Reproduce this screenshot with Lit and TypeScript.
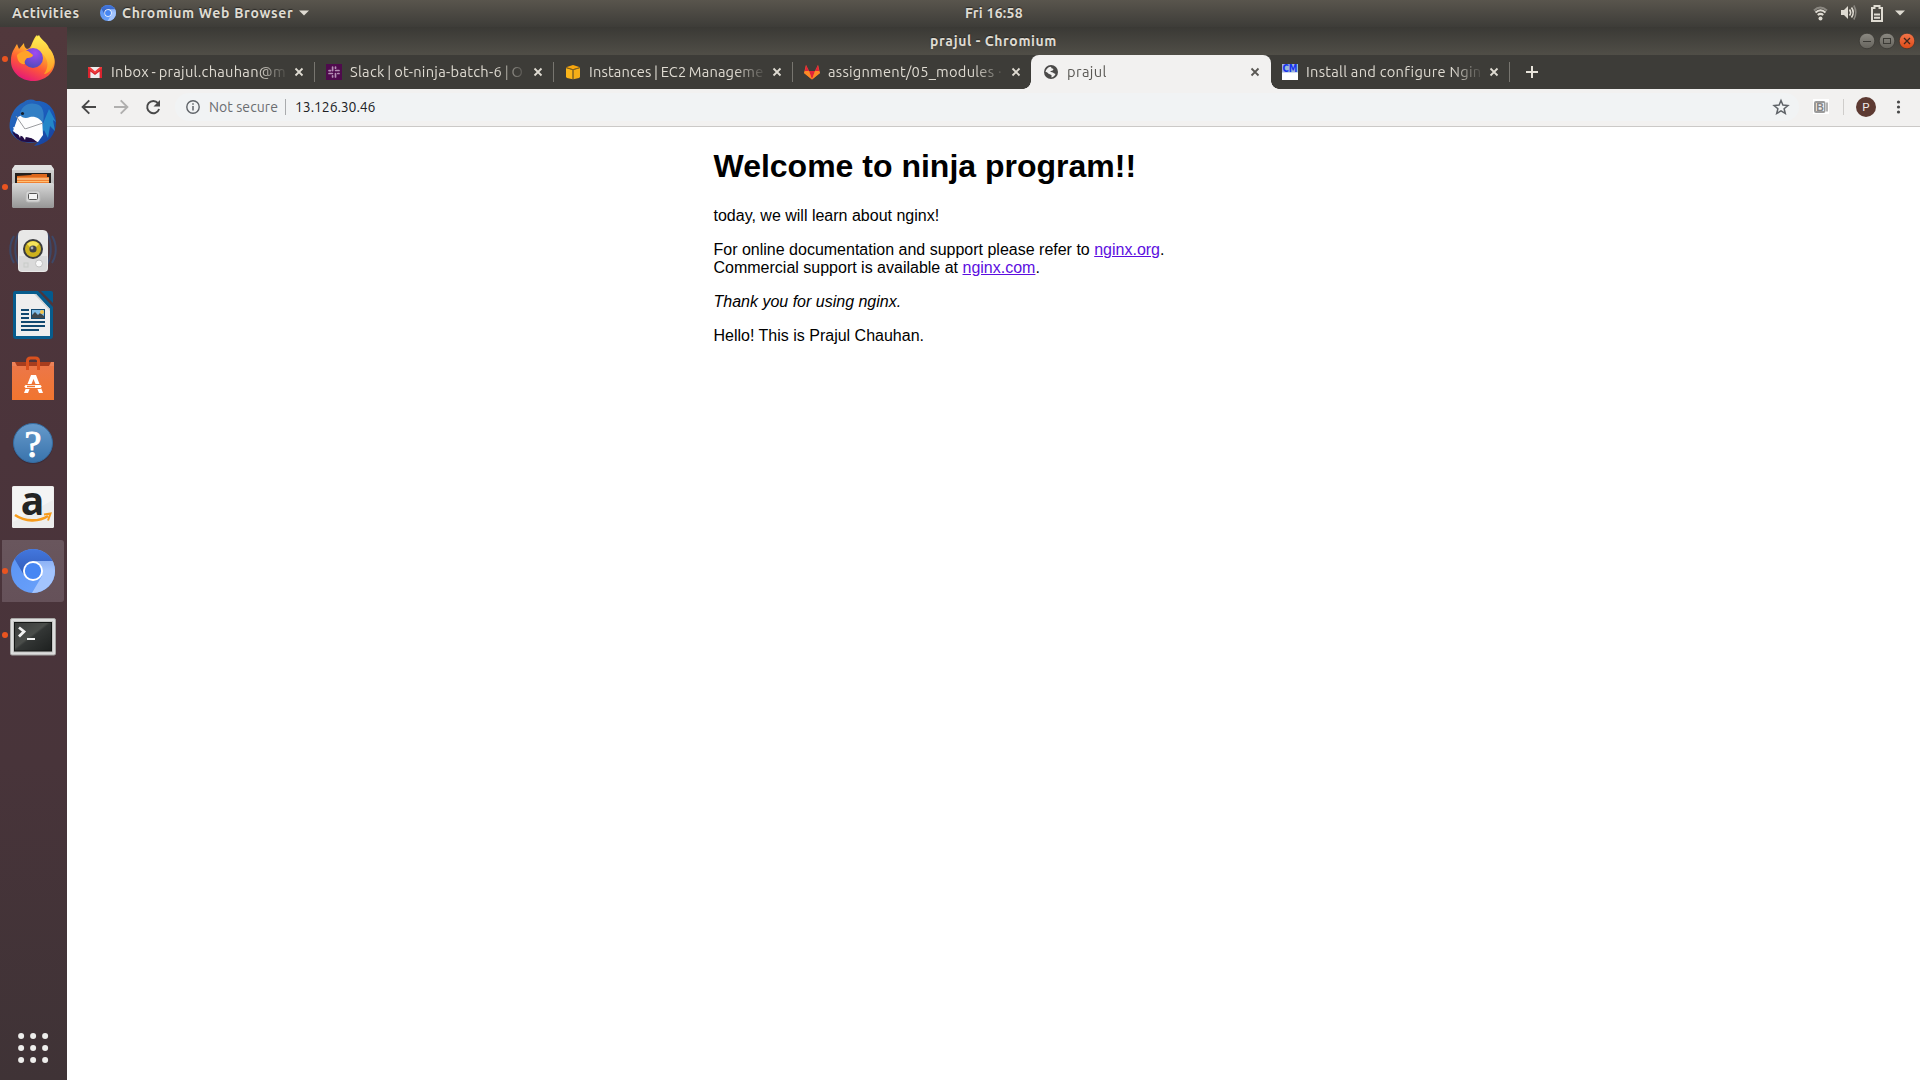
import { LitElement, html, svg, css } from "lit";
import { customElement } from "lit/decorators.js";
import { classMap } from "lit/directives/class-map.js";

const chromiumLogo = (id: string) => svg`
  <defs>
    <clipPath id="${id}-c"><circle cx="22" cy="22" r="22"/></clipPath>
    <linearGradient id="${id}-t" x1="0" y1="0" x2="0" y2="1"><stop offset="0" stop-color="#4377de"/><stop offset="1" stop-color="#3059b5"/></linearGradient>
    <linearGradient id="${id}-l" x1="0" y1="0" x2="1" y2="1"><stop offset="0" stop-color="#5a93f3"/><stop offset="1" stop-color="#6ca3fb"/></linearGradient>
    <linearGradient id="${id}-r" x1="0" y1="0" x2="0" y2="1"><stop offset="0" stop-color="#8db2f5"/><stop offset=".3" stop-color="#a3c4fd"/></linearGradient>
  </defs>
  <g clip-path="url(#${id}-c)">
    <rect width="44" height="44" fill="url(#${id}-l)"/>
    <path d="M3 9 L0 0 H44 V12 H22 L13.5 27 Z" fill="url(#${id}-t)"/>
    <path d="M22 12 H44 V44 H21 L31 27 Z" fill="url(#${id}-r)"/>
  </g>
  <circle cx="22" cy="22" r="10" fill="#fff"/>
  <circle cx="22" cy="22" r="8.1" fill="#4686f3"/>`;

const favicons: Record<string, unknown> = {
  gmail: svg`<path d="M1 3h14v11H1z" fill="#eee"/><path d="M1 14V3.6L8 9l7-5.4V14h-2.4V7.4L8 11 3.4 7.400V14z" fill="#d9232e"/><path d="M1 3h2l5 4.200L13 3h2v1L8 9.500 1 4z" fill="#ef3b3b"/>`,
  slack: svg`<rect width="16" height="16" fill="#4f0b4d"/>
    <g stroke="#b58fb5" stroke-width="1.700" stroke-linecap="round" fill="none">
    <path d="M6.600 3v3.600M3 6.600h1.600M9.500 3v1.200M9.600 6.500h3.400M3 9.500h3.400M6.600 11.800V13M9.500 9.500V13M11.800 9.500H13"/></g>`,
  aws: svg`<path d="M1 3.200 8 1l7 2.200-7 2.100z" fill="#f8a60d"/><path d="M1 4l6.600 2v9.200L2 14 1 13z" fill="#fbb51a"/><path d="M15 4 8.400 6v9.200L14 14l1-1z" fill="#f5ae17"/><path d="M1 3.600l7 2.100 7-2.100M8 5.700V15.300" stroke="#8b6416" stroke-width=".8" fill="none"/>`,
  gitlab: svg`<path d="M8 15.500 0 9l2-8 3 6h6l3-6 2 8z" fill="#fc6d26"/><path d="M8 15.500 5 7h6z" fill="#e2243a"/><path d="M8 15.500 0 9l1-2h4z" fill="#fc8a26"/><path d="M8 15.500l8-6.500-1-2h-4z" fill="#fc8a26"/><path d="M2 1 .9 7H5zM14 1l1.100 6H11z" fill="#e2243a"/>`,
  globe: svg`<circle cx="8" cy="8" r="7" fill="#4b4a49"/><path d="M2.500 7.700C3 5 5 3.200 7.500 2.700c1.500.3.300 1.800 1.800 1.700 1.200-.2 1.500 1.400.3 2-1 .6-2 .2-2.400 1.300.9.700 2.700.1 3.400 1.300.5.800 1.400.3 1.900 1.100-.7 2-2.100 3.100-4 3.500-.3-1.100.6-1.400-.2-2.600C7.200 10 5 10.200 4.600 8.700 4 8.100 3.200 8.500 2.500 7.700z" fill="#f2f1f0"/>`,
  cm: svg`<rect width="16" height="16" fill="#fff"/><rect width="16" height="8.500" fill="#9db8da"/><text x="8" y="7.900" text-anchor="middle" textLength="15" lengthAdjust="spacingAndGlyphs" font-family="DejaVu Sans" font-weight="bold" font-size="10" fill="#1a35ee">CM</text>`,
};

const tabs = [
  { icon: "gmail", title: "Inbox - prajul.chauhan@m", cls: "t1" },
  { icon: "slack", title: "Slack | ot-ninja-batch-6 | O", cls: "t2" },
  { icon: "aws", title: "Instances | EC2 Manageme", cls: "t3" },
  { icon: "gitlab", title: "assignment/05_modules ·", cls: "t4" },
  { icon: "globe", title: "prajul", cls: "t5", active: true },
  { icon: "cm", title: "Install and configure Ngin", cls: "t6" },
];

const launchers = [
  {
    name: "Firefox", running: true,
    art: svg`<defs>
      <linearGradient id="ff" x1=".75" y1="0" x2=".3" y2="1"><stop offset="0" stop-color="#fff04a"/><stop offset=".35" stop-color="#ffb52b"/><stop offset=".65" stop-color="#ff5a36"/><stop offset="1" stop-color="#e3157c"/></linearGradient>
      <linearGradient id="ffy" x1="0" y1="0" x2="0" y2="1"><stop offset="0" stop-color="#fff155"/><stop offset="1" stop-color="#ff9a22"/></linearGradient>
      <radialGradient id="ffp" cx=".6" cy=".25" r=".8"><stop offset="0" stop-color="#a04af3"/><stop offset="1" stop-color="#4c4bb8"/></radialGradient></defs>
      <g transform="translate(0 -2)">
      <path d="M28 2c2 5 9 8 11 14 4 3 7 8 6.800 13C45.500 40 36 48 24 48S1.500 39 2 27.500C2 20 5 16 8 11l2 5 5-6c0 3 1 5 3 6 5 0 5-10 10-14z" fill="url(#ff)"/>
      <path d="M30 2c2 5 8 7 10 13 5 5 7 13 3 20-2 4-6 6-8 6 5-7 4-13 1-17-2-4-7-6-14-6 0-8 4-12 8-16z" fill="url(#ffy)"/>
      <circle cx="24" cy="25" r="10" fill="url(#ffp)"/>
      <path d="M8 22c4-4 8-4 11-4l5 4c0 2-3 3-6 3-2 2-3 4-2 6-5 1-8-4-8-9z" fill="#ffa328"/></g>`,
  },
  {
    name: "Thunderbird", running: false,
    art: svg`<defs><linearGradient id="tb" x1="0" y1="0" x2="1" y2="1"><stop offset="0" stop-color="#2a69b9"/><stop offset=".5" stop-color="#1b5dbc"/><stop offset="1" stop-color="#173b96"/></linearGradient></defs>
      <path d="M1 31C-1 17 7 6 15 3c4-3 8-3 12-1 12-1 20 9 20 21 0 13-8 22-22 24l4-4C15 46 4 40 1 31z" fill="url(#tb)"/>
      <path d="M40 10l7 13-3-2 2 11-5-5-2 12-4-8-7 11 7-20z" fill="#2386c9"/>
      <path d="M9 18c6-4 17-4 24 1l1 17-5 7C18 41 10 37 4 32z" fill="#fdfdfe"/>
      <path d="M7 17l9 13 18-6" stroke="#9a9b9f" fill="none"/>
      <path d="M11 16c1-9 8-13 16-11 7 1 9 9 7 19-3-4-7-7-13-6-4 2-8 1-10-2z" fill="#327fc5"/>
      <circle cx="13.500" cy="14.500" r="1.600" fill="#16202e"/><path d="M3 32c5 4 11 6 20 7l5 4-10 0C10 43 5 38 3 32z" fill="#230e46"/>
      <path d="M4 28l3 7 1-3 3 7 1-4 4 6 1-4 10 4 3-8z" fill="#fdfdfe"/>`,
  },
  {
    name: "Files", running: true,
    art: svg`<defs><linearGradient id="fl" x1="0" y1="0" x2="0" y2="1"><stop offset="0" stop-color="#d8d8d8"/><stop offset="1" stop-color="#969696"/></linearGradient></defs>
      <g transform="translate(0 -1)">
      <path d="M3 7 6 3h36l3 4v38H3z" fill="url(#fl)"/><path d="M6 3h36l3 5H3z" fill="#e1e1e1"/><rect x="6" y="11" width="36" height="12" fill="#25201e"/>
      <path d="M8 14l14-1 1-1h15v10H8z" fill="#dc671c"/><path d="M8 15h32v7H8z" fill="#f18132"/><path d="M8 17h32" stroke="#fde1b6"/><path d="M8 19.500h32" stroke="#ffbf72"/>
      <path d="M5 21h38l2 1v23l-1 1H4l-1-1V22z" fill="url(#fl)"/><path d="M4 21.500h40" stroke="#d8d8d8"/>
      <rect x="17" y="29" width="14" height="11" rx="2" fill="#d7d7d7" stroke="#b9b9b9"/><rect x="19.500" y="31.500" width="9" height="6" rx="1" fill="#f4f4f4" stroke="#565656"/></g>`,
  },
  {
    name: "Rhythmbox", running: false,
    art: svg`<g fill="none" stroke="#3d4868" stroke-width="2"><path d="M5 9c-5 8-5 19 0 27M10 6C5 15 5 29 10 38M43 9c5 8 5 19 0 27M38 6c5 9 5 23 0 32"/></g>
      <path d="M14 3h20q5 0 5 6v32q0 4-4 4H13q-4 0-4-4V9q0-6 5-6z" fill="#e8e8e7"/><path d="M10 29h28v12q0 3-3 3H13q-3 0-3-3z" fill="#dadada"/>
      <circle cx="24" cy="22" r="10" fill="#3a3b3d"/><circle cx="24" cy="22" r="8" fill="#cdb21e"/><path d="M18 17a8 8 0 0 1 12 0l-4 4h-4z" fill="#f5e35b"/><circle cx="24" cy="22" r="3.600" fill="#404247"/><circle cx="23" cy="21" r="1.400" fill="#aeb1b5"/>
      <circle cx="30" cy="36.500" r="3.500" fill="#f8f8f8" stroke="#c2c2c2"/><rect x="15" y="36" width="4" height="4" fill="none" stroke="#c8cbc8"/>`,
  },
  {
    name: "LibreOffice Writer", running: false,
    art: svg`<path d="M6 0h23l15 16v29q0 3-3 3H7q-3 0-3-3V3q0-3 2-3z" fill="#075c8d"/><path d="M32 0h10q2 0 2 2v10z" fill="#045a8d"/>
      <path d="M7 3h20l14 15v27H7z" fill="#eee"/><path d="M27 3 41 18v2L25 3z" fill="#cfd1d2"/>
      <path d="M12 19h8M12 23h8M12 27h8M12 31h24M12 35h24M12 39h18" stroke="#11486f" stroke-width="2"/><rect x="22" y="18" width="14" height="10" fill="#11486f"/><rect x="23" y="19" width="12" height="8" fill="#80bce5"/><path d="M23 27v-3l3-3 3 3 2-2 4 3v2z" fill="#40484b"/><circle cx="33" cy="21" r="2" fill="#f3c44a"/>`,
  },
  {
    name: "Ubuntu Software", running: false,
    art: svg`<defs><linearGradient id="sw" x1="0" y1="0" x2="0" y2="1"><stop offset="0" stop-color="#ec7748"/><stop offset="1" stop-color="#f1752f"/></linearGradient></defs>
      <g transform="translate(0 1)">
      <path d="M3 6h42v5H3z" fill="#a63d1e"/><path d="M3 10h42v34H3z" fill="url(#sw)"/><path d="M3 10V6h3l2 4M45 10V6h-3l-2 4" fill="#ec8259"/>
      <path d="M18.500 14V5q0-3 3-3h5q3 0 3 3v9" fill="none" stroke="#d9511e" stroke-width="3"/>
      <path d="M22 19h5l7 18h-4l-2-5h-7l-2 5h-4zM22.500 28h4l-2-5z" fill="#fff"/><rect x="15" y="28.500" width="18" height="4" rx="2" fill="#fff" stroke="#f1752f"/><path d="M18 30.500h8" stroke="#f1752f" stroke-width="1.500"/></g>`,
  },
  {
    name: "Help", running: false,
    art: svg`<defs><linearGradient id="hp" x1="0" y1="0" x2="0" y2="1"><stop offset="0" stop-color="#669acb"/><stop offset="1" stop-color="#3973ac"/></linearGradient></defs>
      <circle cx="24" cy="25" r="20" fill="#3d2c39"/><circle cx="24" cy="24" r="19.500" fill="url(#hp)" stroke="#356da2"/><text x="24" y="37.500" text-anchor="middle" font-family="Liberation Serif" font-size="38" fill="#fff" stroke="#fff" stroke-width="1">?</text>`,
  },
  {
    name: "Amazon", running: false,
    art: svg`<rect x="3" y="3" width="42" height="42" rx="1.500" fill="#ededed"/><path d="M4 4h40v13L4 39z" fill="#f7f7f7" opacity=".7"/>
      <text x="23.500" y="31.500" text-anchor="middle" font-family="Open Sans" font-size="39" font-weight="bold" fill="#242424">a</text>
      <path d="M6 32c10 7 24 7 33 1" fill="none" stroke="#f79b1b" stroke-width="2.600"/><path d="M35 31.500l6.500-1-2.500 7" fill="none" stroke="#f79b1b" stroke-width="2"/>`,
  },
  { name: "Chromium", running: true, current: true, art: svg`<g transform="translate(2 2)">${chromiumLogo("dock")}</g>` },
  {
    name: "Terminal", running: true,
    art: svg`<defs><linearGradient id="tm" x1="0" y1="0" x2="1" y2="1"><stop offset="0" stop-color="#3a3c3b"/><stop offset=".45" stop-color="#4a4d4a"/><stop offset=".5" stop-color="#333635"/><stop offset="1" stop-color="#1d201f"/></linearGradient></defs>
      <g transform="translate(0 2.500)">
      <rect x="1.500" y="5" width="45" height="36.500" rx="1.500" fill="#ddd" stroke="#a7a7a5"/><rect x="4" y="7.500" width="40" height="31.500" fill="#c2c3c1"/><rect x="5.500" y="9" width="37" height="28.500" fill="url(#tm)" stroke="#141615"/>
      <path d="M10 14l5 4-5 5" stroke="#f2f2f2" stroke-width="2.800" fill="none"/><path d="M18 25.500h8" stroke="#f2f2f2" stroke-width="2"/></g>`,
  },
];

@customElement("dock-bar")
class DockBar extends LitElement {
  static styles = css`
    :host { display: flex; flex-direction: column; justify-content: space-between; box-sizing: border-box; width: 67px; padding-bottom: 8px;
      background: linear-gradient(#51383c, #4b343b 40%, #48343a 70%, #3f3336); }
    .list { display: flex; flex-direction: column; }
    .item { display: grid; grid-template-columns: 9px 48px; align-items: center; box-sizing: border-box; height: 64px; }
    .item .tile { display: grid; place-items: center; width: 48px; height: 48px; }
    .item.current { background: linear-gradient(#69565d, #655159) no-repeat 2px 1px / 62px 62px; clip-path: inset(1px 3px 1px 0 round 3px); }
    .dot { width: 6px; height: 6px; margin-left: 2px; border-radius: 50%; }
    .running .dot { background: #e95420; }
    svg { display: block; overflow: visible; }
    .apps { display: grid; place-items: center; height: 48px; }
  `;
  render() {
    return html`
      <div class="list">
        ${launchers.map((l: any) => html`
          <div class=${classMap({ item: true, running: l.running, current: !!l.current })}>
            <span class="dot"></span>
            <span class="tile"><svg width="48" height="48" viewBox="0 0 48 48">${l.art}</svg></span>
          </div>`)}
      </div>
      <div class="apps">
        <svg width="32" height="32" viewBox="0 0 32 32" fill="#eeeeec">
          ${[4, 16, 28].map((y) => [4, 16, 28].map((x) => svg`<circle cx=${x - 0.9} cy=${y} r="3"/>`))}
        </svg>
      </div>`;
  }
}

@customElement("tab-strip")
class TabStrip extends LitElement {
  static styles = css`
    :host { display: flex; height: 34px; padding-left: 8px; background: #3d3c38; font: 14.67px "Ubuntu", "Noto Sans", sans-serif; color: #dfdbd2; }
    .tab { display: grid; grid-template-columns: 16px 176px 16px; column-gap: 8px; align-items: center; box-sizing: border-box; width: 239px; padding: 0 0 0 12px; }
    .tab.divided, .add { background: linear-gradient(#77756f, #77756f) no-repeat 0 7px / 1px 20px; }
    .tab .close { margin-left: -4px; }
    .tab.active { background: #f2f1f0; color: #5a5854; border-radius: 8px 8px 0 0; width: 240px; margin-right: -1px; position: relative; }
    .tab.active::before, .tab.active::after { content: ""; position: absolute; bottom: 0; width: 8px; height: 8px; }
    .tab.active::before { left: -8px; background: radial-gradient(circle at 0 0, transparent 7.5px, #f2f1f0 8px); }
    .tab.active::after { right: -8px; background: radial-gradient(circle at 100% 0, transparent 7.5px, #f2f1f0 8px); }
    .title { white-space: nowrap; line-height: 20px; mask-image: linear-gradient(90deg, #000 146px, transparent 178px); }
    .t1 .title { letter-spacing: 0.27px; word-spacing: -1px; }
    .t2 .title { letter-spacing: 0.28px; word-spacing: -1px; }
    .t3 .title { letter-spacing: 0.14px; word-spacing: -1px; }
    .t4 .title { letter-spacing: 0.25px; }
    .t5 .title { letter-spacing: 0.4px; }
    .t6 .title { letter-spacing: 0.26px; }
    svg { display: block; }
    .add { display: grid; align-items: center; padding-left: 15px; }
  `;
  render() {
    return html`
      ${tabs.map((t: any, i) => html`
        <div class=${classMap({ tab: true, [t.cls]: true, active: !!t.active, divided: i > 0 && !t.active && !(tabs[i - 1] as any).active })}>
          <svg width="16" height="16" viewBox="0 0 16 16">${favicons[t.icon]}</svg>
          <span class="title">${t.title}</span>
          <svg class="close" width="16" height="16" viewBox="0 0 16 16"><path d="M4.500 4.500l7 7M11.500 4.500l-7 7" stroke="currentColor" stroke-width="1.800"/></svg>
        </div>`)}
      <div class="add"><svg width="16" height="16" viewBox="0 0 16 16"><path d="M8 2v12M2 8h12" stroke="#e8e4db" stroke-width="2"/></svg></div>`;
  }
}

@customElement("tool-bar")
class ToolBar extends LitElement {
  static styles = css`
    :host { display: flex; align-items: center; box-sizing: border-box; height: 38px; padding: 0 12px 1px; background: #f2f1f0; border-bottom: 1px solid #cbc9c7; font: 14px "Ubuntu", "Noto Sans", sans-serif; }
    svg { display: block; flex: none; overflow: visible; }
    .nav { display: flex; gap: 12px; width: 96px; }
    .box { display: flex; align-items: center; flex: none; box-sizing: border-box; width: 1624px; height: 28px; padding: 0 8px; border-radius: 14px; background: #f1f3f4; }
    .secure { width: 76px; margin-left: 8px; color: #6a6d70; letter-spacing: 0.08px; white-space: nowrap; }
    .bar { width: 1px; height: 16px; background: #a9abad; }
    .url { flex: 1; margin-left: 9px; color: #202124; letter-spacing: -0.08px; }
    .right { display: flex; align-items: center; }
    .b { margin-left: 14px; }
    .sep { width: 1px; height: 16px; margin-left: 14px; background: #cfcdcb; }
    .avatar { display: grid; place-items: center; width: 20px; height: 20px; margin-left: 12px; border-radius: 50%; background: #5d3a32; color: #f0e9e7; font: 11.5px "Roboto", sans-serif; }
    .menu { margin-left: 14px; }
  `;
  render() {
    return html`
      <div class="nav">
        <svg width="20" height="20" viewBox="0 0 20 20" fill="none" stroke="#484848" stroke-width="1.900"><path d="M17 10H4M10.300 3.300 3.600 10l6.700 6.700"/></svg>
        <svg width="20" height="20" viewBox="0 0 20 20" fill="none" stroke="#b0afae" stroke-width="1.900"><path d="M3 10h13M9.700 3.300 16.400 10l-6.700 6.700"/></svg>
        <svg width="20" height="20" viewBox="0 0 20 20" fill="none" stroke="#484848" stroke-width="1.900"><path d="M15 6.200A6.100 6.100 0 1 0 16.100 12"/><path d="M17 3v6.500h-6.500z" fill="#484848" stroke="none"/></svg>
      </div>
      <div class="box">
        <svg width="18" height="18" viewBox="0 0 18 18"><circle cx="10" cy="9" r="6.200" fill="none" stroke="#5f6368" stroke-width="1.400"/><path d="M10 8v4.500M10 5.300v1.500" stroke="#5f6368" stroke-width="1.500"/></svg>
        <span class="secure">Not secure</span><span class="bar"></span><span class="url">13.126.30.46</span>
        <svg width="20" height="20" viewBox="0 0 20 20"><path d="M10 3.500l1.900 4.600 5 .4-3.800 3.200 1.200 4.800L10 13.900l-4.300 2.600 1.200-4.800-3.800-3.200 5-.4z" fill="none" stroke="#5f6368" stroke-width="1.500"/></svg>
      </div>
      <div class="right">
        <svg class="b" width="16" height="16" viewBox="0 0 16 16"><rect width="16" height="15" fill="#fff"/><rect x="1" y="2" width="11.500" height="12" rx="2" fill="#9b9b9b"/><rect x="3" y="4" width="8" height="8" fill="#ededed"/><text x="7" y="11.600" text-anchor="middle" font-family="Liberation Sans" font-weight="bold" font-size="10.500" fill="#858585">B</text><path d="M14 3.500v9" stroke="#a0a0a0" stroke-width="1.600"/></svg>
        <span class="sep"></span>
        <span class="avatar">P</span>
        <svg class="menu" width="16" height="16" viewBox="0 0 16 16" fill="#484848"><circle cx="8.500" cy="3" r="1.600"/><circle cx="8.500" cy="8" r="1.600"/><circle cx="8.500" cy="13" r="1.600"/></svg>
      </div>`;
  }
}

@customElement("app-root")
class AppRoot extends LitElement {
  static styles = css`
    :host { display: grid; grid-template: 27px 1053px / 67px 1853px; width: 1920px; height: 1080px; overflow: hidden; background: #fff; }
    svg { display: block; }
    .top { grid-column: 1 / 3; display: grid; grid-template-columns: 965px 1fr auto; align-items: center; box-sizing: border-box; padding-bottom: 1px; background: linear-gradient(#59554d, #3d3c38); color: #dfdbd2; font: bold 14px "Ubuntu", "Noto Sans", sans-serif; white-space: nowrap; text-shadow: 0 -1px 1px #2b2a27; }
    .left { display: flex; align-items: center; padding-left: 12px; }
    .act { width: 88px; letter-spacing: 0.52px; }
    .app { width: 173px; margin-left: 6px; letter-spacing: 0.68px; }
    .caret { margin-left: 4px; }
    .clock { letter-spacing: 0.25px; }
    .tray { display: flex; align-items: center; padding-right: 13px; }
    .window { display: grid; grid-template-rows: 28px 34px 38px 1fr; }
    .titlebar { display: grid; grid-template-columns: 60px 1fr 60px; align-items: center; padding-right: 5px; background: linear-gradient(#3a3935, #504e47); }
    .name { padding-left: 5px; text-align: center; color: #dfdbd2; font: bold 14px "Ubuntu", "Noto Sans", sans-serif; letter-spacing: 0.6px; text-shadow: 0 -1px 1px #2b2a27; }
    .page { font: 16px/18px "Liberation Sans", Arial, sans-serif; color: #000; }
    .body { width: 560px; margin: 0 auto; }
    h1 { margin: 0; padding: 21px 0 22px; font-size: 32px; line-height: 37px; }
    p { margin: 0 0 16px; }
    a { color: #5c0ee0; text-decoration: underline; }
  `;
  render() {
    return html`
      <div class="top">
        <div class="left">
          <span class="act">Activities</span>
          <svg width="16" height="16" viewBox="0 0 44 44">${chromiumLogo("top")}</svg>
          <span class="app">Chromium Web Browser</span>
          <svg class="caret" width="10" height="6" viewBox="0 0 10 6"><path d="M0 .5h10L5 5.500z" fill="#dfdbd2"/></svg>
        </div>
        <span class="clock">Fri 16:58</span>
        <div class="tray">
          <svg width="94" height="22" viewBox="0 0 94 22" fill="none" stroke="#dfdbd2">
            <g stroke-width="2"><path d="M1 8.500Q7 2.500 14 8.500" stroke="#8a8780"/><path d="M2.500 10.500q5-4.500 10 0" /><path d="M4.700 13q2.800-2.200 5.600 0"/></g>
            <circle cx="7.500" cy="16.500" r="2" fill="#dfdbd2" stroke="none"/>
            <path d="M28 8h3l4-4v13l-4-4h-3z" fill="#dfdbd2" stroke="none"/><path d="M36.500 7.500q2.200 3 0 6M38.500 5.500q3.500 5 0 10" stroke-width="1.600"/><path d="M40.800 3.500q4 7 0 14" stroke="#8a8780" stroke-width="1.600"/>
            <path d="M59 6h2.500V4h5v2H69v13H59z" stroke-width="2"/><path d="M61 12.500h6M61 15.700h6" stroke-width="2"/>
            <path d="M82 8.500h10l-5 5z" fill="#dfdbd2" stroke="none"/>
          </svg>
        </div>
      </div>
      <dock-bar></dock-bar>
      <div class="window">
        <div class="titlebar">
          <span></span><span class="name">prajul - Chromium</span>
          <svg width="60" height="20" viewBox="0 0 60 20">
            <defs>
              <linearGradient id="g" x1="0" y1="0" x2="0" y2="1"><stop offset="0" stop-color="#8c8a83"/><stop offset="1" stop-color="#65635c"/></linearGradient>
              <linearGradient id="o" x1="0" y1="0" x2="0" y2="1"><stop offset="0" stop-color="#f5764b"/><stop offset="1" stop-color="#dc4a16"/></linearGradient>
            </defs>
            <circle cx="12" cy="10" r="7.800" fill="url(#g)" stroke="#35342f" stroke-width=".7"/><path d="M8 10.500h8" stroke="#3b3a35"/>
            <circle cx="32" cy="10" r="7.800" fill="url(#g)" stroke="#35342f" stroke-width=".7"/><rect x="28.500" y="7.500" width="7" height="5" fill="none" stroke="#3b3a35"/>
            <circle cx="52" cy="10" r="7.800" fill="url(#o)" stroke="#35342f" stroke-width=".7"/><path d="M49 7l6 6M55 7l-6 6" stroke="#3f261c" stroke-width="1.300"/>
          </svg>
        </div>
        <tab-strip></tab-strip>
        <tool-bar></tool-bar>
        <main class="page">
          <div class="body">
            <h1>Welcome to ninja program!!</h1>
            <p>today, we will learn about nginx!</p>
            <p>For online documentation and support please refer to <a>nginx.org</a>.<br>Commercial support is available at <a>nginx.com</a>.</p>
            <p><em>Thank you for using nginx.</em></p>
            <p>Hello! This is Prajul Chauhan.</p>
          </div>
        </main>
      </div>`;
  }
}
